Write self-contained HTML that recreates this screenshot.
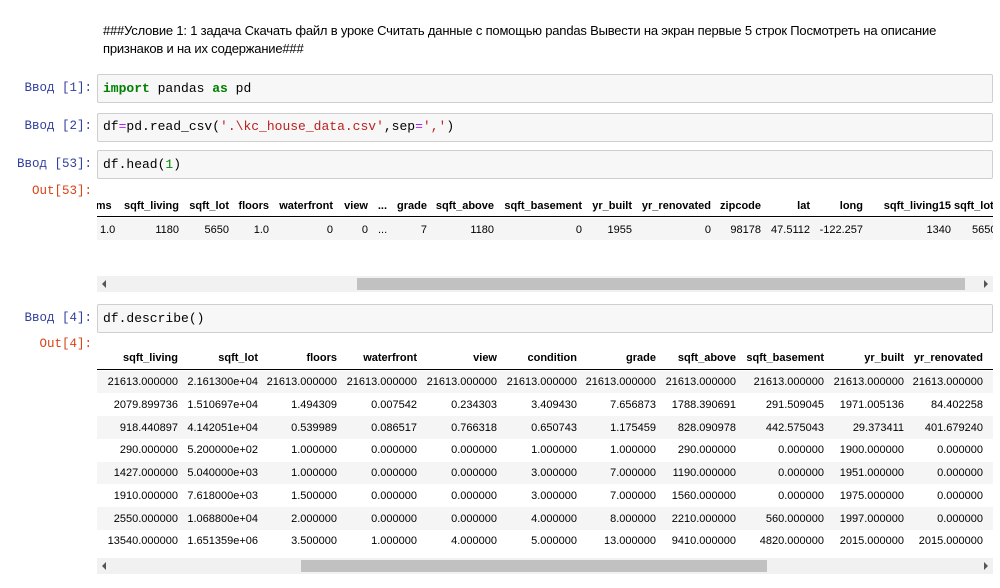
<!DOCTYPE html>
<html><head><meta charset="utf-8"><style>
body{margin:0;width:1000px;height:588px;background:#fff;position:relative;overflow:hidden;font-family:"Liberation Sans",Arial,sans-serif}
.a{position:absolute;white-space:nowrap}
.md{left:103px;font-size:13px;color:#000;letter-spacing:-0.2px}
.p{font-family:"Liberation Mono",monospace;font-size:12.5px;color:#303f9f;text-align:right;width:92px;left:0}
.o{color:#d84315}
.cell{left:97px;width:894px;height:27px;border:1px solid #cfcfcf;border-radius:2px;background:#f7f7f7}
.code{left:103px;font-family:"Liberation Mono",monospace;font-size:13px;color:#000}
.k{color:#008000;font-weight:bold}.s{color:#ba2121}.n{color:#080}.op{color:#aa22ff}
.clip{position:absolute;left:97px;width:896px;overflow:hidden}
.h{position:absolute;font-size:11px;font-weight:bold;text-align:right;white-space:nowrap}
.d{position:absolute;font-size:11px;text-align:right;white-space:nowrap}
.sb{position:absolute;left:97px;width:896px;height:16px;background:#f1f1f1}
.th{position:absolute;top:2px;height:12px;background:#c1c1c1}
</style></head><body>
<div class="a md" style="top:23px">###Условие 1: 1 задача Скачать файл в уроке Считать данные с помощью pandas Вывести на экран первые 5 строк Посмотреть на описание</div>
<div class="a md" style="top:41px">признаков и на их содержание###</div>

<div class="a p" style="top:81px">Ввод [1]:</div>
<div class="a cell" style="top:74px"></div>
<div class="a code" style="top:81px"><span class="k">import</span> pandas <span class="k">as</span> pd</div>

<div class="a p" style="top:119px">Ввод [2]:</div>
<div class="a cell" style="top:113px"></div>
<div class="a code" style="top:119px">df<span class="op">=</span>pd.read_csv(<span class="s">'.\kc_house_data.csv'</span>,sep<span class="op">=</span><span class="s">','</span>)</div>

<div class="a p" style="top:157px">Ввод [53]:</div>
<div class="a cell" style="top:150px"></div>
<div class="a code" style="top:157px">df.head(<span class="n">1</span>)</div>

<div class="a p o" style="top:184px">Out[53]:</div>
<div class="clip" style="top:196px;height:46px">
 <div style="position:absolute;left:0;top:20px;width:896px;height:1px;background:#000"></div>
 <div style="position:absolute;left:0;top:22px;width:896px;height:22px;background:#f5f5f5"></div>
</div>
<div class="sb" style="top:276px"><div class="th" style="left:260px;width:608px"></div>
<div style="position:absolute;left:5px;top:4px;width:0;height:0;border-top:4px solid transparent;border-bottom:4px solid transparent;border-right:4px solid #555"></div>
<div style="position:absolute;right:5px;top:4px;width:0;height:0;border-top:4px solid transparent;border-bottom:4px solid transparent;border-left:4px solid #555"></div></div>

<div class="a p" style="top:311px">Ввод [4]:</div>
<div class="a cell" style="top:304px"></div>
<div class="a code" style="top:311px">df.describe()</div>
<div class="a p o" style="top:337px">Out[4]:</div>
<div class="clip" style="top:348px;height:204px">
 <div style="position:absolute;left:0;top:21px;width:896px;height:1px;background:#000"></div>
 <div style="position:absolute;left:0;top:23px;width:896px;height:22px;background:#f5f5f5"></div>
 <div style="position:absolute;left:0;top:68px;width:896px;height:23px;background:#f5f5f5"></div>
 <div style="position:absolute;left:0;top:114px;width:896px;height:22px;background:#f5f5f5"></div>
 <div style="position:absolute;left:0;top:159px;width:896px;height:23px;background:#f5f5f5"></div>
</div>
<div class="sb" style="top:558px"><div class="th" style="left:204px;width:466px"></div>
<div style="position:absolute;left:5px;top:4px;width:0;height:0;border-top:4px solid transparent;border-bottom:4px solid transparent;border-right:4px solid #555"></div>
<div style="position:absolute;right:5px;top:4px;width:0;height:0;border-top:4px solid transparent;border-bottom:4px solid transparent;border-left:4px solid #555"></div></div>

<div class="clip" style="top:197px;height:45px">
<div class="h" style="left:-8px;top:3px">oms</div>
<div class="h" style="right:814px;top:3px">sqft_living</div>
<div class="h" style="right:764px;top:3px">sqft_lot</div>
<div class="h" style="right:724px;top:3px">floors</div>
<div class="h" style="right:660px;top:3px">waterfront</div>
<div class="h" style="right:625px;top:3px">view</div>
<div class="h" style="right:606px;top:3px">...</div>
<div class="h" style="right:566px;top:3px">grade</div>
<div class="h" style="right:499px;top:3px">sqft_above</div>
<div class="h" style="right:411px;top:3px">sqft_basement</div>
<div class="h" style="right:361px;top:3px">yr_built</div>
<div class="h" style="right:282px;top:3px">yr_renovated</div>
<div class="h" style="right:232px;top:3px">zipcode</div>
<div class="h" style="right:183px;top:3px">lat</div>
<div class="h" style="right:130px;top:3px">long</div>
<div class="h" style="right:42px;top:3px">sqft_living15</div>
<div class="h" style="left:857px;top:3px">sqft_lot15</div>
<div class="d" style="left:3px;top:27px">1.0</div>
<div class="d" style="right:814px;top:27px">1180</div>
<div class="d" style="right:764px;top:27px">5650</div>
<div class="d" style="right:724px;top:27px">1.0</div>
<div class="d" style="right:660px;top:27px">0</div>
<div class="d" style="right:625px;top:27px">0</div>
<div class="d" style="left:281px;top:27px">...</div>
<div class="d" style="right:566px;top:27px">7</div>
<div class="d" style="right:499px;top:27px">1180</div>
<div class="d" style="right:411px;top:27px">0</div>
<div class="d" style="right:361px;top:27px">1955</div>
<div class="d" style="right:282px;top:27px">0</div>
<div class="d" style="right:232px;top:27px">98178</div>
<div class="d" style="right:183px;top:27px">47.5112</div>
<div class="d" style="right:130px;top:27px">-122.257</div>
<div class="d" style="right:42px;top:27px">1340</div>
<div class="d" style="left:875px;top:27px">5650</div>
</div>

<div class="clip" style="top:349px;height:204px">
<div class="h" style="right:815px;top:3px">sqft_living</div>
<div class="h" style="right:735px;top:3px">sqft_lot</div>
<div class="h" style="right:656px;top:3px">floors</div>
<div class="h" style="right:576px;top:3px">waterfront</div>
<div class="h" style="right:496px;top:3px">view</div>
<div class="h" style="right:416px;top:3px">condition</div>
<div class="h" style="right:337px;top:3px">grade</div>
<div class="h" style="right:257px;top:3px">sqft_above</div>
<div class="h" style="right:169px;top:3px">sqft_basement</div>
<div class="h" style="right:89px;top:3px">yr_built</div>
<div class="h" style="right:10px;top:3px">yr_renovated</div>
</div>
<div class="clip" style="top:348px;height:204px">
<div style="position:absolute;left:0;top:28px;width:896px;font-size:11px">
<div style="position:relative;height:22.75px"><span class="d" style="right:815px">21613.000000</span><span class="d" style="right:735px">2.161300e+04</span><span class="d" style="right:656px">21613.000000</span><span class="d" style="right:576px">21613.000000</span><span class="d" style="right:496px">21613.000000</span><span class="d" style="right:416px">21613.000000</span><span class="d" style="right:337px">21613.000000</span><span class="d" style="right:257px">21613.000000</span><span class="d" style="right:169px">21613.000000</span><span class="d" style="right:89px">21613.000000</span><span class="d" style="right:10px">21613.000000</span></div>
<div style="position:relative;height:22.75px"><span class="d" style="right:815px">2079.899736</span><span class="d" style="right:735px">1.510697e+04</span><span class="d" style="right:656px">1.494309</span><span class="d" style="right:576px">0.007542</span><span class="d" style="right:496px">0.234303</span><span class="d" style="right:416px">3.409430</span><span class="d" style="right:337px">7.656873</span><span class="d" style="right:257px">1788.390691</span><span class="d" style="right:169px">291.509045</span><span class="d" style="right:89px">1971.005136</span><span class="d" style="right:10px">84.402258</span></div>
<div style="position:relative;height:22.75px"><span class="d" style="right:815px">918.440897</span><span class="d" style="right:735px">4.142051e+04</span><span class="d" style="right:656px">0.539989</span><span class="d" style="right:576px">0.086517</span><span class="d" style="right:496px">0.766318</span><span class="d" style="right:416px">0.650743</span><span class="d" style="right:337px">1.175459</span><span class="d" style="right:257px">828.090978</span><span class="d" style="right:169px">442.575043</span><span class="d" style="right:89px">29.373411</span><span class="d" style="right:10px">401.679240</span></div>
<div style="position:relative;height:22.75px"><span class="d" style="right:815px">290.000000</span><span class="d" style="right:735px">5.200000e+02</span><span class="d" style="right:656px">1.000000</span><span class="d" style="right:576px">0.000000</span><span class="d" style="right:496px">0.000000</span><span class="d" style="right:416px">1.000000</span><span class="d" style="right:337px">1.000000</span><span class="d" style="right:257px">290.000000</span><span class="d" style="right:169px">0.000000</span><span class="d" style="right:89px">1900.000000</span><span class="d" style="right:10px">0.000000</span></div>
<div style="position:relative;height:22.75px"><span class="d" style="right:815px">1427.000000</span><span class="d" style="right:735px">5.040000e+03</span><span class="d" style="right:656px">1.000000</span><span class="d" style="right:576px">0.000000</span><span class="d" style="right:496px">0.000000</span><span class="d" style="right:416px">3.000000</span><span class="d" style="right:337px">7.000000</span><span class="d" style="right:257px">1190.000000</span><span class="d" style="right:169px">0.000000</span><span class="d" style="right:89px">1951.000000</span><span class="d" style="right:10px">0.000000</span></div>
<div style="position:relative;height:22.75px"><span class="d" style="right:815px">1910.000000</span><span class="d" style="right:735px">7.618000e+03</span><span class="d" style="right:656px">1.500000</span><span class="d" style="right:576px">0.000000</span><span class="d" style="right:496px">0.000000</span><span class="d" style="right:416px">3.000000</span><span class="d" style="right:337px">7.000000</span><span class="d" style="right:257px">1560.000000</span><span class="d" style="right:169px">0.000000</span><span class="d" style="right:89px">1975.000000</span><span class="d" style="right:10px">0.000000</span></div>
<div style="position:relative;height:22.75px"><span class="d" style="right:815px">2550.000000</span><span class="d" style="right:735px">1.068800e+04</span><span class="d" style="right:656px">2.000000</span><span class="d" style="right:576px">0.000000</span><span class="d" style="right:496px">0.000000</span><span class="d" style="right:416px">4.000000</span><span class="d" style="right:337px">8.000000</span><span class="d" style="right:257px">2210.000000</span><span class="d" style="right:169px">560.000000</span><span class="d" style="right:89px">1997.000000</span><span class="d" style="right:10px">0.000000</span></div>
<div style="position:relative;height:22.75px"><span class="d" style="right:815px">13540.000000</span><span class="d" style="right:735px">1.651359e+06</span><span class="d" style="right:656px">3.500000</span><span class="d" style="right:576px">1.000000</span><span class="d" style="right:496px">4.000000</span><span class="d" style="right:416px">5.000000</span><span class="d" style="right:337px">13.000000</span><span class="d" style="right:257px">9410.000000</span><span class="d" style="right:169px">4820.000000</span><span class="d" style="right:89px">2015.000000</span><span class="d" style="right:10px">2015.000000</span></div>
</div>
</div>
</body></html>
